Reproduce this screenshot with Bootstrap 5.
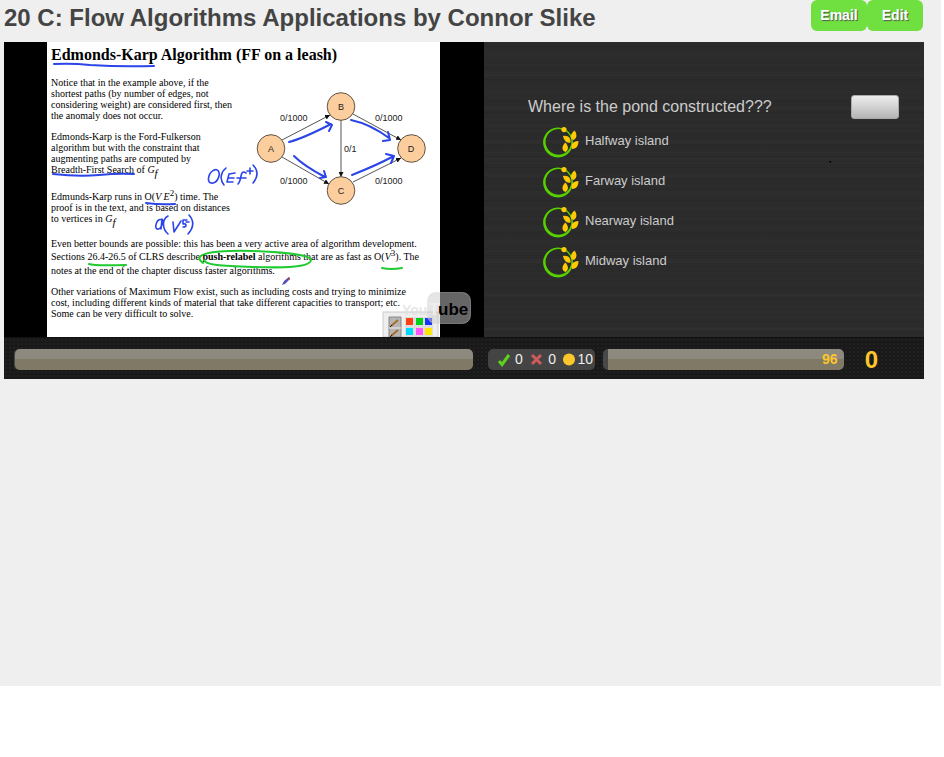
<!DOCTYPE html>
<html lang="en">
<head>
<meta charset="utf-8">
<meta name="viewport" content="width=device-width, initial-scale=1">
<title>20 C: Flow Algorithms Applications by Connor Slike</title>
<link rel="stylesheet" href="https://cdn.jsdelivr.net/npm/bootstrap@5.3.0/dist/css/bootstrap.min.css">
<style>
body { background: #fff; font-family: "Liberation Sans", Arial, sans-serif; }
.page-area { background: #efefef; min-height: 686px; margin-right: 3px; padding: 0 17px 0 4px; }
.page-head { min-height: 42px; padding-right: 1px; }
.page-title { font-size: 24px; line-height: 36px; color: #444; }
.btn-lime { --bs-btn-bg: #6fe03f; --bs-btn-color: #fff; --bs-btn-hover-bg: #62cf34; --bs-btn-hover-color: #fff;
  --bs-btn-border-width: 0; --bs-btn-border-radius: 6px; width: 56px; height: 31px; padding: 0;
  font-size: 14px; font-weight: 700; text-shadow: 1px 1px 1px #555; }
.stage { min-height: 295px; }
.video-pane { flex: 0 0 480px; background: #000; padding-left: 43px; }
.slide { width: 393px; height: 295px; background: #fff; color: #000; padding: 3px 0 0 4px;
  font: 10px/11px "Liberation Serif", "Times New Roman", serif; white-space: nowrap; }
.slide h2 { font-size: 16px; line-height: 20px; font-weight: 700; margin: 0 0 12px; }
.slide p { margin: 0 0 10px; }
.slide p.wide-gap { margin-bottom: 16px; }
.slide .power { font-size: 9px; line-height: 0; vertical-align: 4px; }
.slide .index { font-size: 11px; line-height: 0; vertical-align: -4px; }
.second-line { line-height: 16px; }
.ink { left: 43px; top: 0; }
.quiz-pane { background-color: #2b2b2b; padding: 52px 25px 0 44px; background-image:
  radial-gradient(circle, #000 1px, transparent 1px),
  repeating-linear-gradient(180deg, rgba(255,255,255,.015) 0 1px, transparent 1px 4px, rgba(0,0,0,.06) 4px 5px, transparent 5px 11px),
  repeating-linear-gradient(180deg, transparent 0 13px, rgba(255,255,255,.012) 13px 17px);
  background-size: 3px 3px, auto, auto; background-position: right 92px top 118px, 0 0, 0 0;
  background-repeat: no-repeat, repeat, repeat; }
.question { font-size: 16px; line-height: 26px; color: #ccc; }
.btn-silver { width: 48px; height: 24px; padding: 0; border: 1px solid #aaa; border-radius: 3px;
  background: linear-gradient(#ededed, #b5b5b5); }
.choices { padding-top: 7px; }
.choice { height: 40px; padding-left: 15px; gap: 6px; font-size: 13px; line-height: 28px; color: #ccc; cursor: pointer; }
.status-bar { height: 42px; padding: 2px 46px 0 10px; background-color: #191919;
  background-image: radial-gradient(#212121 1px, transparent 1px); background-size: 4px 4px; border-top: 1px solid #111; }
.meter { height: 21px; border-radius: 5px; background: #484848; }
.meter-video { flex: 0 0 459px; padding-left: 1px; }
.meter-time { flex: 1 1 0; padding-left: 5px; }
.meter .progress-bar { width: 100%; border-radius: 0 5px 5px 0; background: linear-gradient(#8d897e 48%, #807966 48%); }
.meter-video .progress-bar { border-radius: 5px; }
.time-left { font-size: 14px; color: #fdc62b; font-weight: 700; padding-right: 6px; text-align: right; }
.tally { flex: 0 0 107px; height: 21px; margin: 0 8px 0 15px; border-radius: 5px; background: #444;
  color: #eee; font-size: 14px; line-height: 21px; padding: 0 2px 0 9px; }
.total { color: #fdc62b; font-size: 24px; line-height: 22px; font-weight: 700; margin-left: 21px; }
</style>
<script src="https://cdn.jsdelivr.net/npm/bootstrap@5.3.0/dist/js/bootstrap.bundle.min.js"></script>
</head>
<body>
<svg class="d-none" aria-hidden="true">
  <symbol id="ring" viewBox="0 0 36 32">
    <path fill="#58cf00" fill-rule="evenodd" d="M15 .5a15 15 0 1 0 .1 0zM15.500 2a12.900 12.900 0 1 1-.1 0z"/>
    <circle cx="21" cy="2.600" r="2.600" fill="#ffc905"/>
    <g fill="#ffc905">
      <path d="M31.500 3.500c-5 4-4 8-1.500 9.500c4-1 4.500-6 1.500-9.500z"/>
      <path d="M20 9c5-1 8 2 7.500 6.500c-4 1-6.500-2-7.500-6.500z"/>
      <path d="M22.300 15.500c-4 4-3.500 8 0 9.500c3.500-2 3.500-6 0-9.500z"/>
      <path d="M35.500 14c-6 0-8 4-6.500 8c4 0 6.500-3 6.500-8z"/>
    </g>
  </symbol>
</svg>

<main class="page-area">
  <header class="page-head d-flex justify-content-between align-items-start">
    <h1 class="page-title fw-bold m-0">20 C: Flow Algorithms Applications by Connor Slike</h1>
    <div class="d-flex">
      <button type="button" class="btn btn-lime">Email</button>
      <button type="button" class="btn btn-lime">Edit</button>
    </div>
  </header>

  <div class="stage d-flex">
    <section class="video-pane position-relative" aria-label="Lecture video">
      <div class="slide">
        <h2>Edmonds-Karp Algorithm (FF on a leash)</h2>
        <p>Notice that in the example above, if the<br>shortest paths (by number of edges, not<br>considering weight) are considered first, then<br>the anomaly does not occur.</p>
        <p class="wide-gap">Edmonds-Karp is the Ford-Fulkerson<br>algorithm but with the constraint that<br>augmenting paths are computed by<br>Breadth-First Search of <i>G<span class="index">f</span></i></p>
        <p class="pb-1">Edmunds-Karp runs in O(<i>V E</i><span class="power">2</span>) time. The<br>proof is in the text, and is based on distances<br>to vertices in <i>G<span class="index">f</span></i></p>
        <p>Even better bounds are possible: this has been a very active area of algorithm development.<br><span class="second-line">Sections 26.4-26.5 of CLRS describe <b>push-relabel</b> algorithms that are as fast as O(<i>V</i><span class="power">3</span>). The</span><br>notes at the end of the chapter discuss faster algorithms.</p>
        <p>Other variations of Maximum Flow exist, such as including costs and trying to minimize<br>cost, including different kinds of material that take different capacities to transport; etc.<br>Some can be very difficult to solve.</p>
      </div>
      <svg class="ink position-absolute" width="437" height="295" viewBox="47 42 437 295" aria-label="Flow network and handwritten notes">
        <defs>
          <marker id="tip" viewBox="0 0 6 6" refX="6" refY="3" markerWidth="5" markerHeight="5" orient="auto"><path d="M0 0l6 3l-6 3z" fill="#111"/></marker>
        </defs>
        <g stroke="#555" fill="none" marker-end="url(#tip)">
          <path d="M282 140L330 115"/><path d="M282 157L329 184"/><path d="M341 120V177"/><path d="M353 114L401 140"/><path d="M353 182L401 158"/>
        </g>
        <g fill="#fdce9d" stroke="#5f5143">
          <circle cx="341" cy="106.500" r="13.800"/><circle cx="271" cy="148.500" r="13.800"/><circle cx="411.500" cy="148.500" r="13.800"/><circle cx="341" cy="190.500" r="13.800"/>
        </g>
        <g font-family="Liberation Sans, Arial, sans-serif" font-size="9" fill="#222">
          <g text-anchor="middle"><text x="341" y="110">B</text><text x="271" y="152">A</text><text x="411" y="152">D</text><text x="341" y="194">C</text></g>
          <text x="280" y="121">0/1000</text><text x="375" y="121">0/1000</text><text x="280" y="184">0/1000</text><text x="375" y="184">0/1000</text><text x="344" y="152">0/1</text>
        </g>
        <g fill="none" stroke="#2b45e8" stroke-width="2" stroke-linecap="round" stroke-linejoin="round">
          <path d="M54 64q18-1 36 1q30 2 64 1"/>
          <path d="M53 174q26 3 46 1q20-2 35-1"/>
          <path d="M146 203q14 2 29 1"/>
          <path d="M289 142Q304 138 331 124M326 122L332 125L329 131"/>
          <path d="M294 156Q304 166 325 177M324 171L326 177L320 178"/>
          <path d="M351 120Q370 124 389 138M388 132L390 140L383 141"/>
          <path d="M352 175Q377 165 392 157M386 154L394 156L391 163"/>
        </g>
        <g fill="none" stroke="#2b45e8" stroke-width="1.600" stroke-linecap="round" stroke-linejoin="round">
          <path d="M215 170c-6 1-9 12-4 13c7 1 11-11 6-13c-1-1-3 0-3 0M226 168c-5 4-7 11-2 17M235 173l-6 1l-2 8h6M229 178h5M246 173q-4-3-5 3t-3 8M237 178h9M247 171h6M250 168v6M253 165q8 8 0 18"/>
          <path d="M162 220c-5-3-8 8-5 9c4 1 7-7 5-10l-1 10M168 216c-6 3-6 13 0 18M173 222l1 10l7-11M187 220h-4v4c4-1 4 3 0 3M186 222h3M189 215q8 9-1 19"/>
        </g>
        <g fill="none" stroke="#1fca32" stroke-width="2" stroke-linecap="round">
          <path d="M89 264q5 2 37 1"/>
          <path d="M203 263c-11-8 3-13 49-12c30 1 59 4 59 9c-1 8-29 8-58 7c-32-1-48-2-49-7"/>
          <path d="M382 268q9 2 20 0"/>
        </g>
        <path d="M282 285l2-4l5-4l1 2l-5 5z" fill="#574fb9"/><path d="M287 279l2-2l1 2l-1 1z" fill="#a34b50"/>
        <g>
          <path d="M383 337V312h55V337z" fill="#eee" stroke="#ccc"/>
          <path d="M389 317h12v20h-12z" fill="#b5b5b5" stroke="#888"/><path d="M389 328h12" stroke="#eee"/>
          <path d="M391 326l7-6M391 336l7-6" stroke="#a86b2a" stroke-width="2"/>
          <path d="M390 327l2-2M390 337l2-2" stroke="#222"/>
          <path d="M405 317h28v20h-28z" fill="#ddd"/>
          <path d="M406 318h7v7h-7z" fill="#ff4013"/><path d="M416 318h7v7h-7z" fill="#00ce19"/><path d="M425 318h7v7h-7z" fill="#1733f5"/>
          <path d="M406 328h7v7h-7z" fill="#00d9ff"/><path d="M416 328h7v7h-7z" fill="#ff55fa"/><path d="M425 328h7v7h-7z" fill="#ffe700"/>
        </g>
        <g font-family="Liberation Sans, Arial, sans-serif" font-weight="700">
          <rect x="427.500" y="292.500" width="43" height="31" rx="8" fill="#ccc" fill-opacity=".5" stroke="#ddd" stroke-opacity=".4"/>
          <text x="402" y="315" font-size="14" fill="#ddd" fill-opacity=".7">You</text>
          <text x="429" y="315" font-size="17" fill="#eee">T</text>
          <text x="438" y="315" font-size="17" fill="#000">ube</text>
        </g>
      </svg>
    </section>

    <form class="quiz-pane flex-grow-1">
      <div class="d-flex justify-content-between align-items-center">
        <p class="question m-0" id="q">Where is the pond constructed???</p>
        <button type="button" class="btn btn-silver" aria-label="Submit"></button>
      </div>
      <div class="choices" role="radiogroup" aria-labelledby="q">
        <label class="choice d-flex position-relative"><input class="visually-hidden" type="radio" name="island"><svg width="36" height="32"><use href="#ring" width="36" height="32"/></svg><span>Halfway island</span></label>
        <label class="choice d-flex position-relative"><input class="visually-hidden" type="radio" name="island"><svg width="36" height="32"><use href="#ring" width="36" height="32"/></svg><span>Farway island</span></label>
        <label class="choice d-flex position-relative"><input class="visually-hidden" type="radio" name="island"><svg width="36" height="32"><use href="#ring" width="36" height="32"/></svg><span>Nearway island</span></label>
        <label class="choice d-flex position-relative"><input class="visually-hidden" type="radio" name="island"><svg width="36" height="32"><use href="#ring" width="36" height="32"/></svg><span>Midway island</span></label>
      </div>
    </form>
  </div>

  <footer class="status-bar d-flex align-items-center">
    <div class="progress meter meter-video" role="progressbar" aria-label="Video progress"><div class="progress-bar"></div></div>
    <div class="tally d-flex align-items-center justify-content-between">
      <span class="d-flex align-items-center gap-1"><svg width="14" height="14" viewBox="0 0 14 14"><path d="M2 8l3 3.500L12 2" fill="none" stroke="#5bd31c" stroke-width="3"/></svg>0</span>
      <span class="d-flex align-items-center gap-1"><svg width="14" height="14" viewBox="0 0 14 14"><path d="M2 2l9 9M11 2L2 11" stroke="#cf5a5a" stroke-width="3"/></svg>0</span>
      <span class="d-flex align-items-center"><svg width="14" height="14" viewBox="0 0 14 14"><circle cx="6" cy="6.500" r="6" fill="#fdc62b"/></svg>10</span>
    </div>
    <div class="progress meter meter-time" role="progressbar" aria-label="Time left"><div class="progress-bar time-left">96</div></div>
    <div class="total">0</div>
  </footer>
</main>
</body>
</html>
